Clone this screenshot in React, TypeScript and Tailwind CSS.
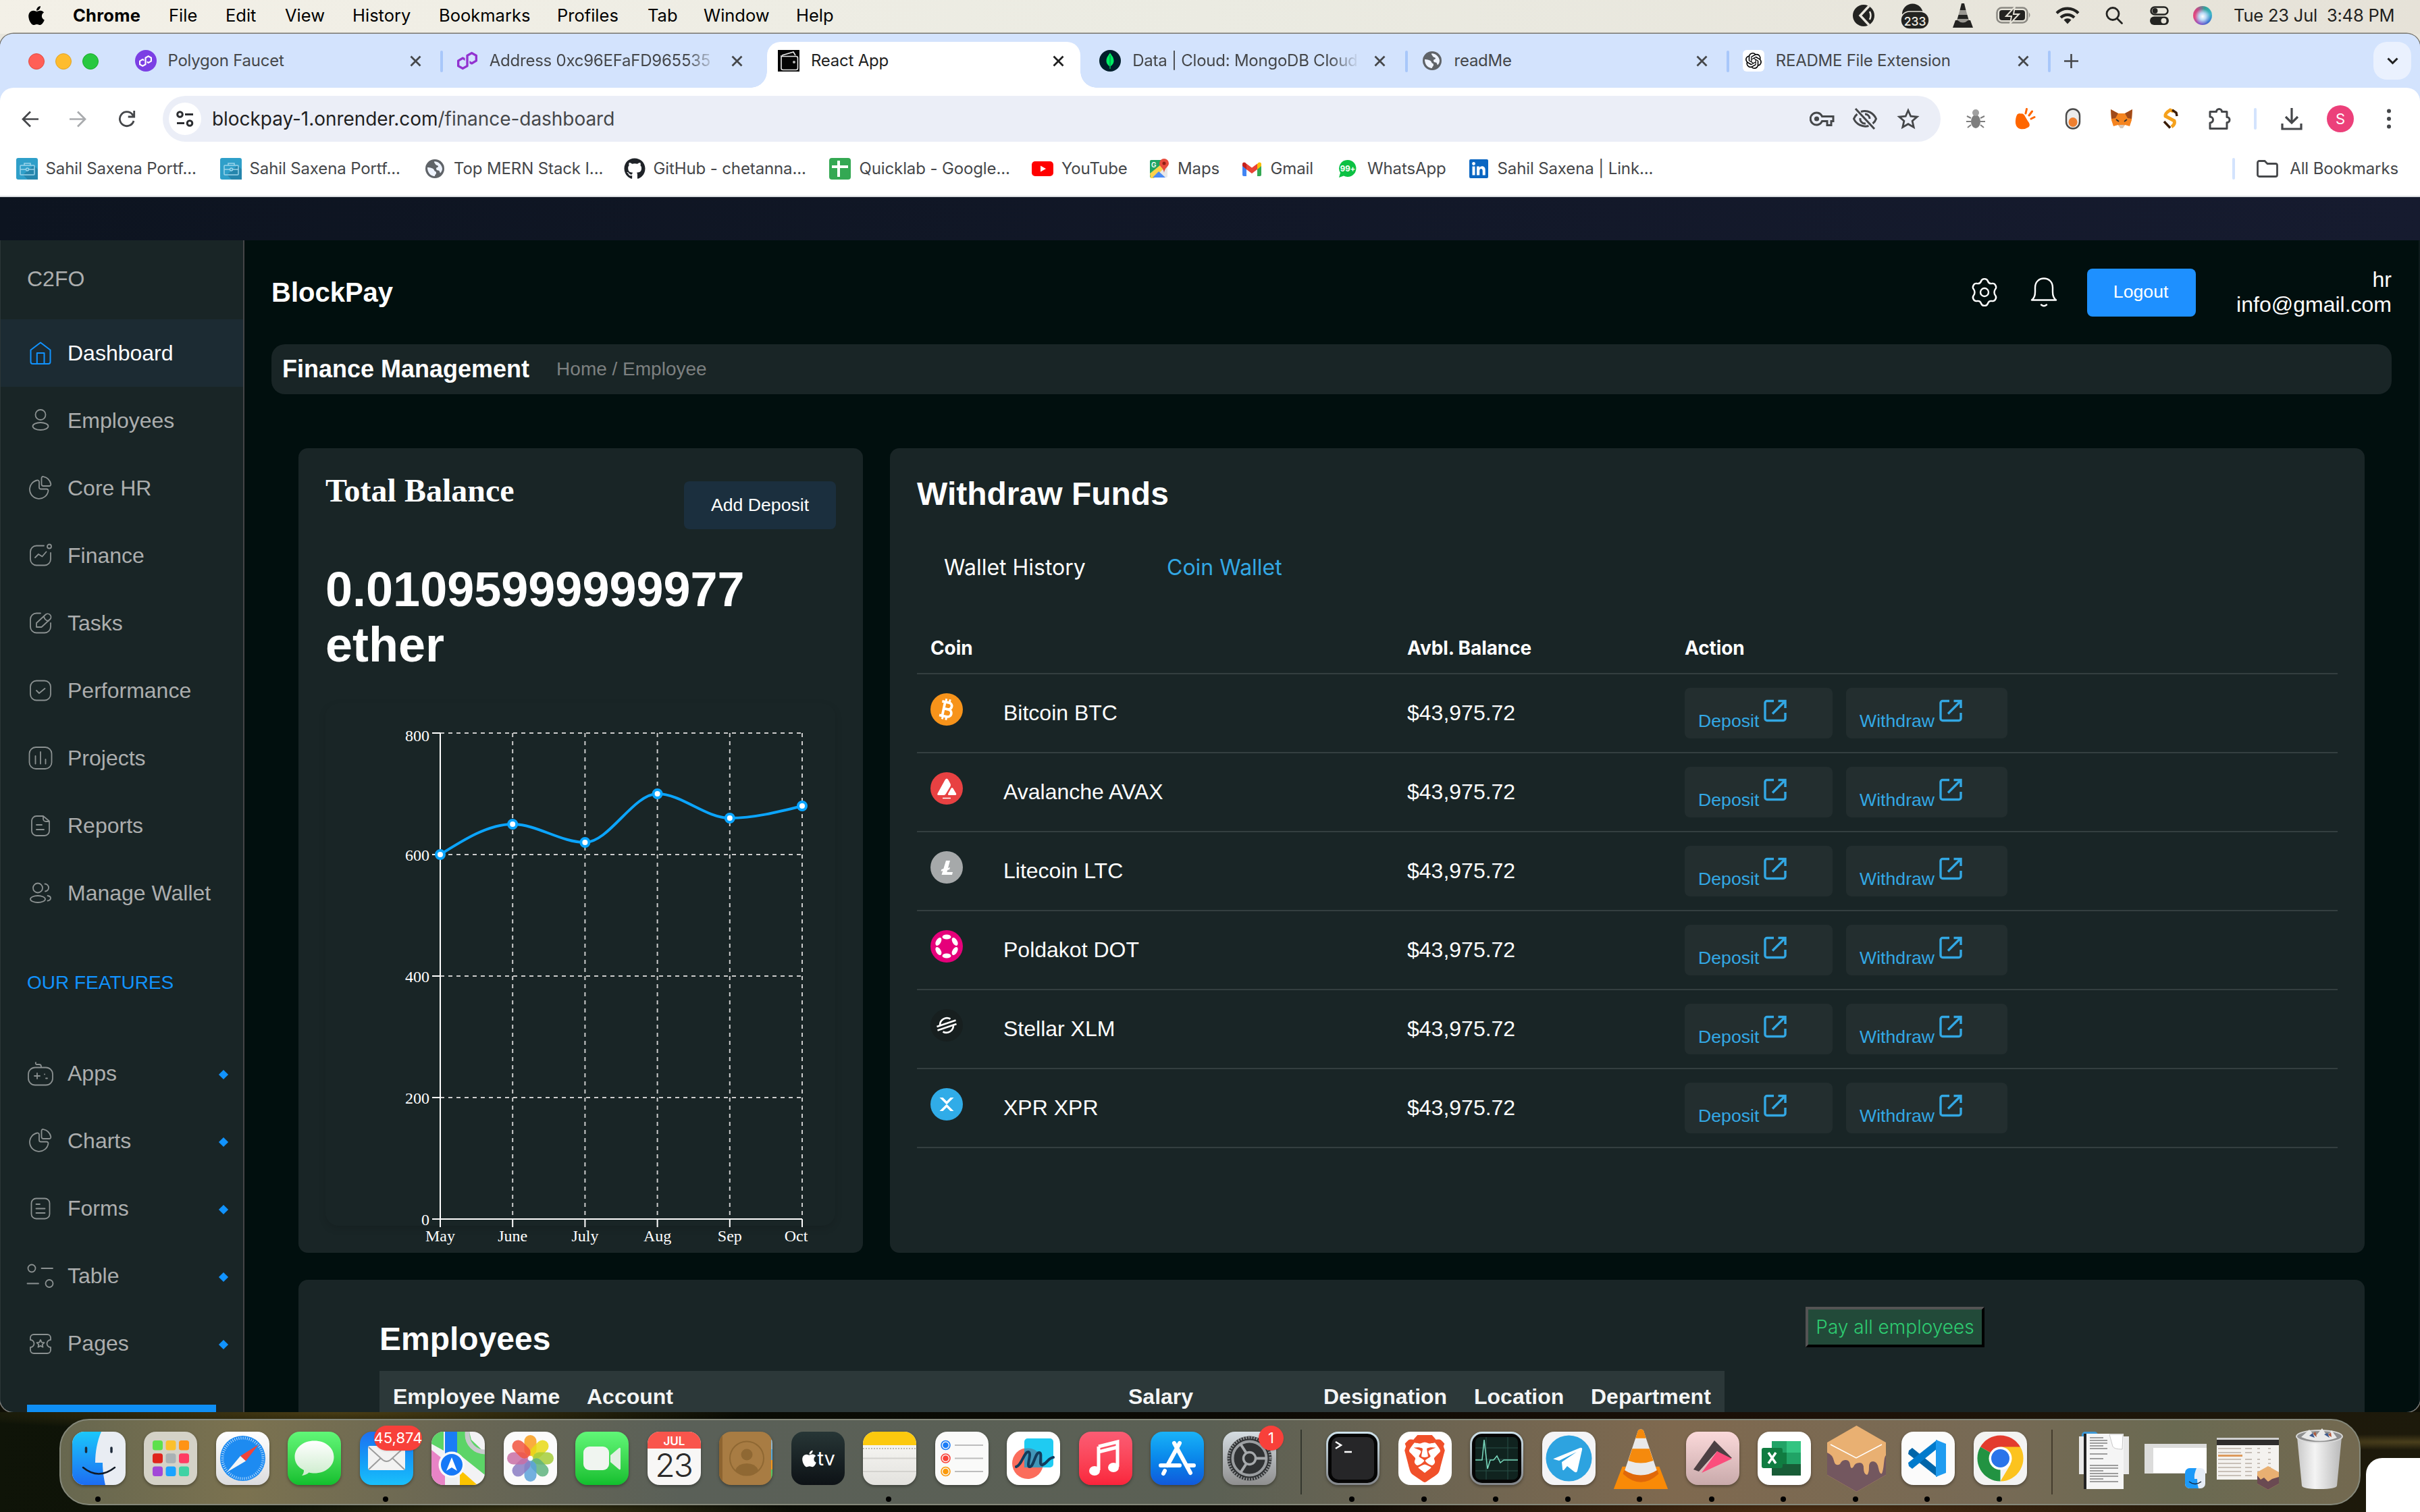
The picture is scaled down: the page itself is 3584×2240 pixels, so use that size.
import React from 'react';
import { FaApple, FaGithub } from 'react-icons/fa';
import { SiOpenai, SiPolygon, SiBrave } from 'react-icons/si';

/* ---------------------------------- menu bar --------------------------------- */

const menuItems = [
  { label: 'File', w: 'w-[84px]' },
  { label: 'Edit', w: 'w-[88px]' },
  { label: 'View', w: 'w-[100px]' },
  { label: 'History', w: 'w-[128px]' },
  { label: 'Bookmarks', w: 'w-[175px]' },
  { label: 'Profiles', w: 'w-[134px]' },
  { label: 'Tab', w: 'w-[83px]' },
  { label: 'Window', w: 'w-[137px]' },
  { label: 'Help', w: 'w-[80px]' },
];

function MenuBar() {
  return (
    <div className="flex h-[50px] shrink-0 items-start justify-between bg-linear-to-r from-[#f3f0e7] via-[#ebebe2] to-[#e6e2d8] text-[25.5px] text-black">
      <div className="flex h-[46px] items-center">
        <FaApple className="ml-[39px] h-[32px] w-[30px]" />
        <span className="ml-[39px] w-[142px] font-bold tracking-[0.250px]">Chrome</span>
        {menuItems.map((m) => (
          <span key={m.label} className={m.w}>{m.label}</span>
        ))}
      </div>
      <div className="flex h-[46px] items-center text-[#1f1f1d]">
        <svg width="32" height="34" viewBox="0 0 32 34">
          <circle cx="16" cy="17" r="16" fill="#232321" />
          <path d="M24 3L11 17l13 14" fill="none" stroke="#e9e6dd" strokeWidth="3.5" />
          <path d="M25 11c2 4 2 8 0 12" fill="none" stroke="#e9e6dd" strokeWidth="2.5" />
        </svg>
        <svg className="ml-[39px]" width="42" height="40" viewBox="0 0 42 40">
          <path d="M2 18a15 15 0 0 1 31 0z" fill="#232321" />
          <rect x="0" y="14" width="42" height="26" rx="13" fill="#232321" stroke="#e9e6dd" strokeWidth="1.5" />
          <text x="21" y="34.500" textAnchor="middle" fontSize="17.500" fontFamily="Inter" fontWeight="500" fill="#f0ede4">233</text>
        </svg>
        <svg className="ml-[33px]" width="34" height="38" viewBox="0 0 34 38">
          <path d="M15 1h4l2.500 10h-9z" fill="#232321" />
          <path d="M12.500 11h9l2 7h-13z" fill="#999791" />
          <path d="M10.500 18h13l2 7h-17z" fill="#232321" />
          <path d="M8.500 24h17l1 5q-9.500 6-19 0z" fill="#999791" />
          <path d="M6 26h3q8 7 16 0h3l4 11H2z" fill="#232321" />
        </svg>
        <svg className="ml-[32px]" width="52" height="26" viewBox="0 0 52 26">
          <rect x="1.500" y="1.500" width="45" height="22" rx="7" fill="none" stroke="#8b8983" strokeWidth="2.500" />
          <rect x="5" y="5" width="38" height="15" rx="4" fill="#232321" />
          <path d="M49 8.500q3 3.500 0 8z" fill="#8b8983" />
          <path d="M28 0L15 14h8l-2 11 13-14h-8z" fill="#232321" stroke="#e6e3d9" strokeWidth="2" />
        </svg>
        <svg className="ml-[36px]" width="36" height="28" viewBox="0 0 36 28" fill="none" stroke="#232321" strokeWidth="4.200">
          <path d="M2 10.500a22 22 0 0 1 32 0" />
          <path d="M8 17a14 14 0 0 1 20 0" />
          <path d="M12.500 20.500a8 8 0 0 1 11 0L18 26.500z" fill="#232321" stroke="none" />
        </svg>
        <svg className="ml-[37px]" width="28" height="28" viewBox="0 0 28 28" fill="none" stroke="#232321" strokeWidth="2.800" strokeLinecap="round">
          <circle cx="12" cy="11.500" r="9" />
          <path d="M18.500 18.500l7 7" />
        </svg>
        <svg className="ml-[39px]" width="28" height="28" viewBox="0 0 28 28">
          <rect x="1.500" y="1.500" width="25" height="11" rx="5.500" fill="none" stroke="#232321" strokeWidth="2.500" />
          <circle cx="7.500" cy="7" r="4" fill="#232321" />
          <rect x="0" y="15.500" width="28" height="12.500" rx="6.200" fill="#232321" />
          <circle cx="20.500" cy="21.700" r="4" fill="#e6e3d9" />
        </svg>
        <span className="ml-[36px] h-[28px] w-[28px] rounded-full bg-[radial-gradient(circle_at_50%_55%,#ffffff_0%,#b9d8f5_25%,transparent_55%),conic-gradient(from_20deg,#2fa39a,#3fb6c9,#3b6fd0,#8a58c9,#e8467c,#c74a86,#2fa39a)]" />
        <span className="ml-[32px] w-[238px] text-[25.500px] tracking-[-0.200px] whitespace-pre">Tue 23 Jul  3:48 PM</span>
        <span className="w-[38px]" />
      </div>
    </div>
  );
}

/* --------------------------------- tab strip --------------------------------- */

function Globe({ size }: { size: number }) {
  return (
    <svg width={size} height={size} viewBox="0 0 28 28">
      <circle cx="14" cy="14" r="14" fill="#5f6368" />
      <path d="M3 12c4 0 9 1 10 4s3 1 3 4-2 2-2 5c-6 0-11-5-11-13zM13 3.500c4-1 11 3 12 10 0 3-1 5-3 7-1-2-1-4-3-4s-3-1-3-3 3-1 3-3-3-1-4-3-2-2-2-4z" fill="#eef3fd" />
    </svg>
  );
}

function Close({ dark }: { dark?: boolean }) {
  return (
    <svg width="17" height="17" viewBox="0 0 17 17" fill="none" stroke={dark ? '#1f1f1f' : '#45474a'} strokeWidth="2.800">
      <path d="M1.500 1.500l14 14M15.500 1.500l-14 14" />
    </svg>
  );
}

type TabProps = { icon: React.ReactNode; title: string; active?: boolean; fade?: boolean; divider?: boolean };

function Tab({ icon, title, active, fade, divider }: TabProps) {
  return (
    <div className="relative flex h-[56px] w-[476.250px] shrink-0 items-center">
      {active && (
        <div className="absolute top-0 left-[6px] h-[68px] w-[464px] rounded-t-[20px] bg-white">
          <div className="absolute bottom-0 -left-[24px] h-[24px] w-[24px] bg-[radial-gradient(circle_at_0_0,#d3e3fd_23.500px,#ffffff_24px)]" />
          <div className="absolute -right-[24px] bottom-0 h-[24px] w-[24px] bg-[radial-gradient(circle_at_100%_0,#d3e3fd_23.500px,#ffffff_24px)]" />
        </div>
      )}
      <div className="relative flex w-full items-center">
        <div className="ml-[22px] flex h-[32px] w-[32px] items-center justify-center">{icon}</div>
        <div className={'ml-[17px] w-[340px] whitespace-nowrap text-[24px] tracking-[-0.240px] ' + (active ? 'text-[#1f1f1f] ' : 'text-[#45474a] ') + (fade ? '[mask-image:linear-gradient(to_right,black_86%,transparent_99%)]' : '')}>{title}</div>
        <div className="ml-[18px]"><Close dark={active} /></div>
      </div>
      {divider && <div className="absolute top-[13px] right-[-2px] h-[32px] w-[4px] rounded-full bg-[#a8c7fa]" />}
    </div>
  );
}

function TabStrip() {
  return (
    <div className="flex h-[80px] shrink-0 items-start bg-[#d3e3fd] pt-[12px]">
      <div className="flex h-[58px] w-[177.500px] shrink-0 items-center gap-[16px] pl-[42px]">
        <span className="h-[24px] w-[24px] rounded-full border border-[#e24b41] bg-[#ff5f57]" />
        <span className="h-[24px] w-[24px] rounded-full border border-[#e1a325] bg-[#febc2e]" />
        <span className="h-[24px] w-[24px] rounded-full border border-[#1aab29] bg-[#28c840]" />
      </div>
      <Tab divider title="Polygon Faucet" icon={<span className="flex h-[32px] w-[32px] items-center justify-center rounded-full bg-[#7b3fe4]"><SiPolygon className="h-[19px] w-[19px] text-white" /></span>} />
      <Tab fade title="Address 0xc96EFaFD965535" icon={<SiPolygon className="h-[30px] w-[30px] text-[#9233d0]" />} />
      <Tab active title="React App" icon={
        <svg width="32" height="32" viewBox="0 0 32 32">
          <rect width="32" height="32" fill="#050505" />
          <path d="M5 9V27a2.500 2.500 0 0 0 2.500 2.500H27a2.500 2.500 0 0 0 2.500-2.500V12A2.500 2.500 0 0 0 27 9.500H6zM6 8l17-5 3 5" fill="none" stroke="#e8e8e8" strokeWidth="1.600" />
          <circle cx="24" cy="18" r="2" fill="#bbb" />
        </svg>} />
      <Tab fade divider title="Data | Cloud: MongoDB Cloud" icon={
        <svg width="32" height="32" viewBox="0 0 32 32">
          <circle cx="16" cy="16" r="16" fill="#001e2b" />
          <path d="M16 4c1 3 5.500 6 5.500 12 0 5-3.500 7-5 8.500V28h-1v-3.500c-1.500-1.500-5-3.500-5-8.500 0-6 4.500-9 5.500-12z" fill="#00ed64" />
          <path d="M16 8v19" stroke="#00994a" strokeWidth="1.200" />
        </svg>} />
      <Tab divider title="readMe" icon={<Globe size={28} />} />
      <Tab divider title="README File Extension" icon={<span className="flex h-[32px] w-[32px] items-center justify-center rounded-[6px] bg-white"><SiOpenai className="h-[24px] w-[24px] text-black" /></span>} />
      <div className="flex h-[56px] flex-1 items-center justify-between pr-[13px] pl-[22px]">
        <svg width="21" height="21" viewBox="0 0 21 21" stroke="#45474a" strokeWidth="2.600"><path d="M10.500 0v21M0 10.500h21" /></svg>
        <div className="flex h-[56px] w-[56px] items-center justify-center rounded-[20px] bg-[#eaf1fe]">
          <svg width="17" height="11" viewBox="0 0 17 11" fill="none" stroke="#1f1f1f" strokeWidth="3"><path d="M1.500 1.500l7 7 7-7" /></svg>
        </div>
      </div>
    </div>
  );
}

/* ---------------------------------- toolbar ---------------------------------- */

function Toolbar() {
  return (
    <div className="flex h-[92px] shrink-0 items-center rounded-t-[20px] bg-white pl-[32px] text-[#45474a]">
      <svg width="25" height="25" viewBox="0 0 25 25" fill="none" stroke="#45474a" strokeWidth="2.700"><path d="M25 12.500H2M13 1.500l-11 11 11 11" /></svg>
      <svg className="ml-[46px]" width="25" height="25" viewBox="0 0 25 25" fill="none" stroke="#a9abae" strokeWidth="2.700"><path d="M0 12.500h23M12 1.500l11 11-11 11" /></svg>
      <svg className="ml-[47px]" width="26" height="26" viewBox="0 0 26 26" fill="none" stroke="#45474a" strokeWidth="2.800"><path d="M23 16A10.500 10.500 0 1 1 21 6.500l2.500 3M23.700 1v9h-9" /></svg>
      <div className="ml-[40px] flex h-[68px] w-[2633px] items-center rounded-full bg-[#ebeef7] pl-[9px]">
        <div className="flex h-[48px] w-[48px] items-center justify-center rounded-full bg-white">
          <svg width="26" height="24" viewBox="0 0 26 24" fill="none" stroke="#2b2d30" strokeWidth="3"><circle cx="5.500" cy="5.500" r="3.800" /><path d="M13 5.500h12M1 18.500h11" /><circle cx="20" cy="18.500" r="3.800" /></svg>
        </div>
        <div className="ml-[16px] flex-1 text-[28px] tracking-[-0.050px] text-[#45474a]"><span className="text-[#1f1f1f]">blockpay-1.onrender.com</span>/finance-dashboard</div>
        <svg width="37" height="24" viewBox="0 0 37 24" fill="none" stroke="#45474a" strokeWidth="3"><path d="M18.500 8.500H35v7h-3v6h-6v-6h-7.500a9 9 0 1 1 0-7z" /><circle cx="10.500" cy="12" r="3.600" fill="#45474a" stroke="none" /></svg>
        <svg className="ml-[26px]" width="38" height="34" viewBox="0 0 38 34" fill="none" stroke="#45474a" strokeWidth="3"><path d="M5 2l28 30M13 6.500C23 3 32 9 35.500 17c-1 3-3 5.500-5 7M24.500 27.500C15 30 6 25 2.500 17c1-2.500 2.500-5 5-7" /><path d="M19 10a7 7 0 0 1 7 7M12 16a7 7 0 0 0 8 8" /></svg>
        <svg className="ml-[28px] mr-[31px]" width="34" height="32" viewBox="0 0 34 32" fill="none" stroke="#45474a" strokeWidth="2.800"><path d="M17 3.500l3.800 8.700 9.400.9-7.100 6.200 2.100 9.200-8.200-4.800-8.200 4.800 2.100-9.200-7.100-6.200 9.400-.9z" /></svg>
      </div>
      <svg className="ml-[37px]" width="30" height="30" viewBox="0 0 30 30">
        <ellipse cx="15" cy="19" rx="7" ry="10" fill="#7e7e7e" /><ellipse cx="15" cy="6" rx="5" ry="5" fill="#a0a0a0" />
        <path d="M8 14L2 11M8 19H1M8 24l-5 4M22 14l6-3M22 19h7M22 24l5 4" stroke="#7e7e7e" strokeWidth="2" />
      </svg>
      <svg className="ml-[42px]" width="32" height="32" viewBox="0 0 32 32">
        <path d="M4.500 9.500q3-3 7 0L22 22q2 4-1 6.500-5 3.500-12 2.500-6-1.500-7-8.500-.5-8 2.500-13z" fill="#f60" />
        <path d="M8 9.500q4-3 7 1l7 12z" fill="#f60" />
        <path d="M17 8l1.500-6.500M22 11l4.500-6M25 16l5-2.500" stroke="#f60" strokeWidth="3" strokeLinecap="round" />
      </svg>
      <svg className="ml-[43px]" width="24" height="32" viewBox="0 0 24 32">
        <rect x="2" y="1.500" width="20" height="29" rx="10" fill="#ececec" stroke="#4a4a4a" strokeWidth="2.400" /><ellipse cx="12" cy="21" rx="6.500" ry="7" fill="#ee7f30" />
      </svg>
      <svg className="ml-[44px]" width="32" height="30" viewBox="0 0 32 30">
        <path d="M0 1l11 6h10l11-6-1 16-3 9-7-2-3 4h-4l-3-4-7 2-3-9z" fill="#f5841f" />
        <path d="M0 1l11 6-4 7-6 1zM32 1L21 7l4 7 6 1z" fill="#a04a1a" />
        <path d="M12 24h8l-2 5h-4z" fill="#d8c7b8" /><path d="M8 16l4 3M24 16l-4 3" stroke="#333" strokeWidth="2" />
      </svg>
      <svg className="ml-[44px]" width="24" height="32" viewBox="0 0 24 32" fill="none">
        <path d="M17 5L12 3Q4 8 5 12l13 7q2 5-4 9" stroke="#f5a11c" strokeWidth="5" />
        <path d="M3 20l9 9.500M22 12l-1-5-6-4" stroke="#3a1c05" strokeWidth="3.500" />
      </svg>
      <svg className="ml-[44px]" width="34" height="34" viewBox="0 0 34 34" fill="none" stroke="#45474a" strokeWidth="3"><path d="M3 6.500h9.500a4 4 0 0 1 8 0H28v8a4 4 0 0 1 0 8v9H3v-8.500a4.500 4.500 0 0 0 0-9z" strokeLinejoin="round" /></svg>
      <div className="ml-[34px] h-[32px] w-[4px] rounded-full bg-[#d3e3fd]" />
      <svg className="ml-[36px]" width="32" height="34" viewBox="0 0 32 34" fill="none" stroke="#45474a" strokeWidth="3.200"><path d="M16 1v21M7 14l9 9 9-9M2 24v8h28v-8" /></svg>
      <div className="ml-[36px] flex h-[40px] w-[40px] items-center justify-center rounded-full bg-[#ec407a] text-[22px] text-white">S</div>
      <svg className="ml-[49px]" width="6" height="30" viewBox="0 0 6 30" fill="#45474a"><circle cx="3" cy="3.500" r="3" /><circle cx="3" cy="15" r="3" /><circle cx="3" cy="26.500" r="3" /></svg>
    </div>
  );
}

/* --------------------------------- bookmarks --------------------------------- */

const Briefcase = () => (
  <svg width="32" height="32" viewBox="0 0 32 32">
    <rect width="32" height="32" rx="3" fill="#2f9fc9" /><path d="M10 25l16-14 6 6v15H17z" fill="#2585ac" />
    <g fill="none" stroke="#9bd4ea" strokeWidth="1.500"><rect x="6" y="11" width="21" height="14" rx="1" /><path d="M12 11V8h9v3M6 17h21" /><circle cx="16.500" cy="17" r="2" fill="#2f9fc9" /></g>
  </svg>
);

const bookmarks: { label: string; w: string; iw: string; icon: React.ReactNode }[] = [
  { label: 'Sahil Saxena Portf...', w: 'w-[302px]', iw: 'w-[43.500px]', icon: <Briefcase /> },
  { label: 'Sahil Saxena Portf...', w: 'w-[304px]', iw: 'w-[43.500px]', icon: <Briefcase /> },
  { label: 'Top MERN Stack I...', w: 'w-[293.500px]', iw: 'w-[42px]', icon: <Globe size={28} /> },
  { label: 'GitHub - chetanna...', w: 'w-[304.500px]', iw: 'w-[44px]', icon: <FaGithub className="h-[32px] w-[32px] text-[#1f2328]" /> },
  {
    label: 'Quicklab - Google...', w: 'w-[300px]', iw: 'w-[44.500px]', icon: (
      <svg width="32" height="32" viewBox="0 0 32 32"><rect width="32" height="32" rx="4" fill="#34a853" /><path d="M14 4v24M4 13h24" stroke="#fff" strokeWidth="4" /></svg>)
  },
  {
    label: 'YouTube', w: 'w-[175px]', iw: 'w-[44px]', icon: (
      <svg width="32" height="22" viewBox="0 0 32 22"><rect width="32" height="22" rx="5" fill="#f00" /><path d="M13 6.500v9l8-4.500z" fill="#fff" /></svg>)
  },
  {
    label: 'Maps', w: 'w-[137px]', iw: 'w-[41px]', icon: (
      <svg width="28" height="30" viewBox="0 0 28 30"><rect y="2" width="26" height="26" rx="2" fill="#e8e8e8" /><path d="M0 4a2 2 0 0 1 2-2h14v10L0 28z" fill="#1fa463" /><path d="M0 22L16 9l4 6L6 29H1z" fill="#fbd24b" /><path d="M4 28l9-9 10 9z" fill="#4a8af4" /><path d="M21 0a7 7 0 0 1 7 7c0 5-6 6-7 14-1-8-7-9-7-14a7 7 0 0 1 7-7z" fill="#e64b3c" /><circle cx="21" cy="7" r="2.500" fill="#8f1f14" /><text x="2" y="13" fontSize="10" fontFamily="Inter" fontWeight="600" fill="#fff">G</text></svg>)
  },
  {
    label: 'Gmail', w: 'w-[144px]', iw: 'w-[41.500px]', icon: (
      <svg width="28" height="21" viewBox="0 0 28 21"><path d="M0 3v16a2 2 0 0 0 2 2h4V9z" fill="#4285f4" /><path d="M28 3v16a2 2 0 0 1-2 2h-4V9z" fill="#34a853" /><path d="M22 3l1.500-2C26-.500 28 1 28 3v3l-6 5z" fill="#fbbc04" /><path d="M6 3L4.500 1C2-.500 0 1 0 3v3l6 5z" fill="#c5221f" /><path d="M6 2.500l8 6 8-6V11l-8 6-8-6z" fill="#ea4335" /></svg>)
  },
  {
    label: 'WhatsApp', w: 'w-[192px]', iw: 'w-[41px]', icon: (
      <svg className="-ml-[2px]" width="28" height="28" viewBox="0 0 28 28"><path d="M14 1a12.500 12.500 0 1 1-6 23.500L1 27l2-7A12.500 12.500 0 0 1 14 1z" fill="#0cc143" /><text x="14" y="18" textAnchor="middle" fontSize="11.500" fontFamily="Inter" fontWeight="700" fill="#fff">99+</text></svg>)
  },
  {
    label: 'Sahil Saxena | Link...', w: 'w-[300px]', iw: 'w-[41.500px]', icon: (
      <svg width="28" height="28" viewBox="0 0 28 28"><rect width="28" height="28" rx="2" fill="#0a66c2" /><g fill="#fff"><rect x="4.500" y="10.500" width="4" height="13" /><circle cx="6.500" cy="6.500" r="2.400" /><path d="M11 10.500h4v2c2-3.500 8.700-3 8.700 3v8h-4V17c0-4-4.500-4-4.500 0v6.500H11z" /></g></svg>)
  },
];

function BookmarksBar() {
  return (
    <div className="flex h-[70px] shrink-0 items-center justify-between border-b-2 border-[#dadde0] bg-white pb-[12px] pl-[24px] text-[24px] tracking-[-0.120px] text-[#45474a]">
      <div className="flex items-center">
        {bookmarks.map((b, i) => (
          <div key={i} className={'flex shrink-0 items-center whitespace-nowrap ' + b.w}>
            <span className={'flex h-[32px] shrink-0 items-center ' + b.iw}>{b.icon}</span>
            <span>{b.label}</span>
          </div>
        ))}
      </div>
      <div className="flex items-center pr-[32px]">
        <div className="h-[32px] w-[4px] rounded-full bg-[#d3e3fd]" />
        <svg className="ml-[32px]" width="32" height="26" viewBox="0 0 32 26" fill="none" stroke="#45474a" strokeWidth="2.800"><path d="M1.500 4A2.500 2.500 0 0 1 4 1.500h8l4 4h12A2.500 2.500 0 0 1 30.500 8v14a2.500 2.500 0 0 1-2.500 2.500H4A2.500 2.500 0 0 1 1.500 22z" /></svg>
        <span className="ml-[17px]">All Bookmarks</span>
      </div>
    </div>
  );
}

/* ----------------------------------- sidebar --------------------------------- */

const roundedBox = 'M12 3.500h12a9 9 0 0 1 9 9v11a9 9 0 0 1-9 9H12a9 9 0 0 1-9-9v-11a9 9 0 0 1 9-9z';
const openBox = 'M23 3.500H12a9 9 0 0 0-9 9v11a9 9 0 0 0 9 9h12a9 9 0 0 0 9-9V14';
const pie = (
  <>
    <path d="M13 6.500c1.500-.3 3 .8 3 2.500v8c0 1.500 1 2.500 2.500 2.500H27c1.600 0 2.800 1.400 2.400 3A13.800 13.800 0 1 1 13 6.500z" />
    <path d="M19.500 3.500c0-1.600 1.300-2.800 2.800-2.400A14.500 14.500 0 0 1 33.300 12c.3 1.600-.9 3-2.500 3h-8.500c-1.600 0-2.800-1.200-2.800-2.800z" />
  </>
);

const icons: Record<string, React.ReactNode> = {
  Dashboard: <path d="M3.500 13.500L18 2.500l14.500 11V31a3 3 0 0 1-3 3h-23a3 3 0 0 1-3-3zM12.800 34V18h10.700v16" />,
  Employees: <><circle cx="18" cy="9.500" r="7.500" /><ellipse cx="18" cy="26.500" rx="11.500" ry="5.500" /></>,
  'Core HR': pie,
  Finance: <><path d={openBox} /><circle cx="31" cy="4.500" r="3" /><path d="M10 21l5-5 5.500 3.500 6-7" /></>,
  Tasks: <><path d="M18 3.500h-6a9 9 0 0 0-9 9v11a9 9 0 0 0 9 9h12a9 9 0 0 0 9-9V18" /><path d="M12 18L25.500 5.500a4.800 4.800 0 0 1 7 6.500L19.500 24H12zM23 8c.5 4 3 6.500 7 7" /></>,
  Performance: <><path d={roundedBox} /><path d="M12 18l4 4 8.500-7" /></>,
  Projects: <><path d="M11 2h14a9.500 9.500 0 0 1 9.500 9.500v13A9.500 9.500 0 0 1 25 34H11a9.500 9.500 0 0 1-9.500-9.500v-13A9.500 9.500 0 0 1 11 2z" /><path d="M10.500 15v11.500M18 9v17.500M25.500 20v6.500" /></>,
  Reports: <><path d="M22 4H12a7 7 0 0 0-7 7v15a7 7 0 0 0 7 7h12a7 7 0 0 0 7-7V11.500zM22 4v4a4 4 0 0 0 4 4h5M12 17h8M12 24h11" /></>,
  'Manage Wallet': <><circle cx="14" cy="10.500" r="7" /><ellipse cx="14" cy="27" rx="11" ry="5" /><path d="M24.500 4.500c3 0 5.500 2.500 5.500 5.500s-2 5-5 5.500M28.500 22c3 .5 4.500 2 4.500 3.500 0 2-2 3.500-4.500 4" /></>,
  Apps: <><path d="M10 9.500h16a10 10 0 0 1 10 10v6a10 10 0 0 1-10 10H10a10 10 0 0 1-10-10v-6a10 10 0 0 1 10-10zM19 9.500V8a3 3 0 0 0-3-3h-3a2 2 0 0 1-2-3M13 18v8M9 22h8M24 19.500h.1M26 25.500h2" /></>,
  Charts: pie,
  Forms: <><rect x="4.500" y="3.500" width="27" height="30" rx="7" /><path d="M11.500 12h5.500M11.500 18.500h13M11.500 25h13" /></>,
  Table: <><circle cx="5" cy="7" r="5.500" /><path d="M19.500 7H36M-1.500 29.500H15" /><circle cx="31" cy="29.500" r="5.500" /></>,
  Pages: <><path d="M8 5h20a5 5 0 0 1 5 5v3a5 5 0 0 0 0 11v4a5 5 0 0 1-5 5H8a5 5 0 0 1-5-5v-4a5 5 0 0 0 0-11v-3a5 5 0 0 1 5-5z" /><path d="M18 13l1.700 3.700 3.800.4-2.800 2.700.8 4-3.500-2-3.500 2 .8-4-2.800-2.700 3.800-.4z" /></>,
};

function NavItem({ label, active, marker }: { label: string; active?: boolean; marker?: boolean }) {
  return (
    <div className={'flex h-[100px] shrink-0 items-center pl-[41px] text-[32px] ' + (active ? 'bg-[#1c2b33] text-white' : 'text-[#acaeae]')}>
      <svg className="overflow-visible" width="36" height="36" viewBox="0 0 36 36" fill="none" stroke={active ? '#1193ff' : '#8b9191'} strokeWidth={active ? 2 : 1.8} strokeLinejoin="round" strokeLinecap="round">{icons[label]}</svg>
      <span className="ml-[22px] flex-1">{label}</span>
      {marker && <span className="mt-[4px] mr-[24px] h-[10px] w-[10px] rotate-45 bg-[#1193ff]" />}
    </div>
  );
}

function Sidebar() {
  return (
    <div className="flex w-[362px] shrink-0 flex-col overflow-hidden border-r-2 border-l border-r-[#454648] border-l-[#2b3637] bg-[#192526]">
      <div className="flex h-[117px] shrink-0 items-center pb-[3px] pl-[39px] text-[32px] text-[#acaeae]">C2FO</div>
      <NavItem label="Dashboard" active />
      {['Employees', 'Core HR', 'Finance', 'Tasks', 'Performance', 'Projects', 'Reports', 'Manage Wallet'].map((l) => <NavItem key={l} label={l} />)}
      <div className="flex h-[167px] shrink-0 items-center pb-[1px] pl-[39px] text-[28px] text-[#1193ff]">OUR FEATURES</div>
      {['Apps', 'Charts', 'Forms', 'Table', 'Pages'].map((l) => <NavItem key={l} label={l} marker />)}
      <div className="mt-[41px] ml-[39px] h-[20px] w-[280px] shrink-0 bg-[#0f8ff5]" />
    </div>
  );
}

/* ----------------------------------- content --------------------------------- */

const months = ['May', 'June', 'July', 'Aug', 'Sep', 'Oct'];
const balances = [600, 650, 620, 700, 660, 680];
const px = (i: number) => 169 + i * 107.2;
const py = (v: number) => 764 - v * 0.9;

function Chart() {
  return (
    <svg className="ml-[1px] overflow-visible" width="755" height="774" viewBox="0 0 755 774" fontFamily="Liberation Serif" fontSize="24" fill="#fff">
      <g stroke="#ccc" strokeWidth="2" strokeDasharray="6 6">
        {[200, 400, 600, 800].map((v) => <line key={v} x1="169" x2="705" y1={py(v)} y2={py(v)} />)}
        {[1, 2, 3, 4, 5].map((i) => <line key={i} x1={px(i)} x2={px(i)} y1="44" y2="764" />)}
      </g>
      <g stroke="#fff" strokeWidth="2">
        <path d="M169 44V764H705" fill="none" />
        {[0, 200, 400, 600, 800].map((v) => <line key={v} x1="157" x2="169" y1={py(v)} y2={py(v)} />)}
        {months.map((m, i) => <line key={m} x1={px(i)} x2={px(i)} y1="764" y2="776" />)}
      </g>
      {[0, 200, 400, 600, 800].map((v) => <text key={v} x="153" y={py(v) + (v === 800 ? 12 : 8.5)} textAnchor="end">{v}</text>)}
      {months.map((m, i) => <text key={m} x={i === 5 ? 696 : px(i)} y="797" textAnchor="middle">{m}</text>)}
      <path d="M169 224C204.700 201.500 240.500 179 276.200 179C311.900 179 347.700 206 383.400 206C419.100 206 454.900 134 490.600 134C526.300 134 562.100 170 597.800 170C633.500 170 669.300 161 705 152" fill="none" stroke="#0ba5ff" strokeWidth="4" />
      {balances.map((v, i) => <circle key={i} cx={px(i)} cy={py(v)} r="6" fill="#fff" stroke="#0ba5ff" strokeWidth="4" />)}
    </svg>
  );
}

const coins: { name: string; icon: React.ReactNode }[] = [
  {
    name: 'Bitcoin BTC', icon: <><circle cx="24" cy="24" r="24" fill="#f7931a" /><g transform="rotate(12 24 24)" fill="none" stroke="#fff" strokeWidth="3.800"><path d="M15 13.500h10.500a5 5 0 0 1 0 10H19M15 34.500h11.500a5.500 5.500 0 0 0 0-11H19M19.500 13.500v21" /><path d="M20.500 8.500v5M26 8.500v5M20.500 34.500v5M26 34.500v5" strokeWidth="3" /></g></>,
  },
  { name: 'Avalanche AVAX', icon: <><circle cx="24" cy="24" r="24" fill="#e84142" /><path d="M21.500 11.500q2.500-4 5 0l3 5.500q1 2 0 4l-7 11.500q-1.200 1.500-3 1.500h-7.500q-2.500 0-1.500-2.500zM30.500 24q1.500-2 3 0l4.500 7.500q.8 2.500-1.500 2.500h-9q-2.300 0-1.200-2.500z" fill="#fff" /><path d="M18 38.500h12" stroke="#fff" strokeWidth="1.500" /></> },
  { name: 'Litecoin LTC', icon: <><circle cx="24" cy="24" r="24" fill="#a6a9aa" /><path d="M23 14h6l-3 11 3-1-.8 3-3 1-.8 3H33l-1 4H16.500l1.800-6-2.800 1 .8-3 3-1z" fill="#fff" /></> },
  { name: 'Poldakot DOT', icon: <><circle cx="24" cy="24" r="24" fill="#e6007a" />{[0, 60, 120, 180, 240, 300].map((a) => <ellipse key={a} cx="24" cy="10" rx="6.500" ry="3.600" fill="#fff" transform={`rotate(${a} 24 24)`} />)}</> },
  { name: 'Stellar XLM', icon: <><circle cx="24" cy="24" r="24" fill="#171f1f" /><g fill="none" stroke="#fff" strokeWidth="2.600"><path d="M14 23.500a10.500 10.500 0 0 1 15.500-9M34 24.500a10.500 10.500 0 0 1-15.500 9M9.500 26L37.500 16.500M10.500 31.500L38.500 22" /></g></> },
  { name: 'XPR XPR', icon: <><circle cx="24" cy="24" r="24" fill="#30ace8" /><path d="M13.500 14h5l5.500 5.500 5.500-5.500h5L24 24.500zM13.500 34h5l5.500-5.500 5.500 5.500h5L24 23.500z" fill="#fff" /></> },
];

function ActionButton({ label, w }: { label: string; w: string }) {
  return (
    <div className={'flex h-[75px] items-start rounded-[8px] bg-[#232e2f] pl-[20px] text-[26.670px] text-[#33a8e4] ' + w}>
      <span className="mt-[29px]">{label}</span>
      <svg className="mt-[17px] ml-[7px]" width="34" height="34" viewBox="0 0 34 34" fill="none" stroke="#33a8e4" strokeWidth="3.400">
        <path d="M15 2.500H5A3 3 0 0 0 2 5.500v23a3 3 0 0 0 3 3h24a3 3 0 0 0 3-3V20M21.500 2.500H32v10.500M31.500 3L13 21.500" />
      </svg>
    </div>
  );
}

function WithdrawFunds() {
  return (
    <div className="flex h-[1192px] w-[2184px] flex-col rounded-[14px] bg-[#192526] px-[40px] pt-[40px] text-white">
      <div className="flex h-[55px] items-center text-[48px] font-bold">Withdraw Funds</div>
      <div className="flex h-[162px] items-center pt-[2px] pl-[40px] font-[Inter] text-[32px]">
        <span className="w-[330px]">Wallet History</span>
        <span className="text-[#33a8e4]">Coin Wallet</span>
      </div>
      <div className="grid h-[78px] grid-cols-[727px_410px_1fr] items-center border-b-2 border-[#343f40] pt-[2px] pl-[20px] font-[Inter] text-[28px] font-bold tracking-[-0.100px]">
        <span>Coin</span><span className="-ml-[21px]">Avbl. Balance</span><span className="-ml-[20px]">Action</span>
      </div>
      {coins.map((c) => (
        <div key={c.name} className="grid h-[117px] grid-cols-[108px_599px_410px_1fr] items-center border-b-2 border-[#343f40] pl-[20px] text-[32px]">
          <svg className="-mt-[11px]" width="48" height="48" viewBox="0 0 48 48">{c.icon}</svg>
          <span className="-mt-[2px]">{c.name}</span>
          <span className="-mt-[2px] -ml-px">$43,975.72</span>
          <div className="flex gap-[20px]">
            <ActionButton label="Deposit" w="w-[219px]" />
            <ActionButton label="Withdraw" w="w-[239px]" />
          </div>
        </div>
      ))}
    </div>
  );
}

function TotalBalance() {
  return (
    <div className="flex h-[1192px] w-[836px] flex-col rounded-[14px] bg-[#192526] px-[40px] pt-[49px] text-white">
      <div className="flex h-[71px] items-start justify-between">
        <div className="font-['Liberation_Serif'] text-[48px] leading-[28px] font-bold">Total Balance</div>
        <div className="flex h-[71px] w-[225px] items-center justify-center rounded-[8px] bg-[#1b2f3e] pb-[2px] text-[26.670px]">Add Deposit</div>
      </div>
      <div className="mt-[48px] text-[72px] leading-[82px] font-bold">{'0.01095' + '9999999' + '77'}<br />ether</div>
      <div className="mt-[46px] h-[774px] w-[755px] rounded-[20px] shadow-[0_4px_12px_rgba(0,0,0,0.120)]"><Chart /></div>
    </div>
  );
}

function Dashboard() {
  return (
    <div className="flex flex-1 flex-col border-r-2 border-[#0d1a1b] bg-[#010f0e] font-['Liberation_Sans',sans-serif]">
      <div className="flex h-[154px] shrink-0 items-center justify-between px-[40px] text-white">
        <div className="text-[40px] font-bold">BlockPay</div>
        <div className="flex items-center">
          <svg width="40" height="44" viewBox="0 0 40 44" fill="none" stroke="#fff" strokeWidth="2.400" strokeLinejoin="round">
            <circle cx="20" cy="22" r="6" />
            <path d="M15 5.500c1.500-4.500 8.500-4.500 10 0 1 3 3 4 6 3.500 4.500-1 8 5 5 8.500-2 2.500-2 6.500 0 9 3 3.500-.5 9.500-5 8.500-3-.5-5 .5-6 3.500-1.500 4.500-8.500 4.500-10 0-1-3-3-4-6-3.500-4.500 1-8-5-5-8.500 2-2.500 2-6.500 0-9-3-3.500.5-9.500 5-8.500 3 .5 5-.5 6-3.500z" />
          </svg>
          <svg className="ml-[48px]" width="40" height="44" viewBox="0 0 40 44" fill="none" stroke="#fff" strokeWidth="2.400" strokeLinecap="round" strokeLinejoin="round">
            <path d="M2 33.500h36c-4-3-5-7-5-12V15C33 7 27.500 1.500 20 1.500S7 7 7 15v6.500c0 5-1 9-5 12zM16 40.500q4 3.500 8 0" />
          </svg>
          <div className="ml-[44px] flex h-[71px] w-[161px] items-center justify-center rounded-[8px] bg-[#1e90ff] pr-[2px] pb-[2px] text-[26.670px]">Logout</div>
          <div className="ml-[60px] text-right text-[32px] leading-[37px]">hr<br />info@gmail.com</div>
        </div>
      </div>
      <div className="mx-[40px] flex h-[74px] shrink-0 items-center rounded-[20px] bg-[#192526] pl-[16px]">
        <span className="text-[36px] font-bold text-white">Finance Management</span>
        <span className="ml-[40px] text-[28px] text-[#7d8080]">Home / Employee</span>
      </div>
      <div className="mt-[80px] ml-[80px] flex shrink-0 gap-[40px]">
        <TotalBalance />
        <WithdrawFunds />
      </div>
      <div className="mt-[40px] ml-[80px] h-[220px] w-[3060px] shrink-0 rounded-t-[14px] bg-[#192526] pt-[40px] pl-[120px]">
        <div className="flex h-[95px] w-[2377px] items-start justify-between">
          <div className="text-[48px] leading-[95px] font-bold text-white">Employees</div>
          <div className="flex h-[60px] w-[265px] items-center justify-center border-4 border-t-[#545454] border-r-black border-b-black border-l-[#545454] bg-[#224a39] font-[Inter] text-[28px] font-light text-[#2ecc71]">Pay all employees</div>
        </div>
        <div className="flex h-[75px] w-[1992px] items-center bg-[#2c3839] pl-[20px] text-[32px] font-bold text-[#f4f5f5]">
          <span className="w-[287px]">Employee Name</span>
          <span className="w-[802px]">Account</span>
          <span className="w-[289px]">Salary</span>
          <span className="w-[223px]">Designation</span>
          <span className="w-[173px]">Location</span>
          <span>Department</span>
        </div>
      </div>
    </div>
  );
}

/* ------------------------------------ dock ----------------------------------- */

function Squircle({ bg, children }: { bg: string; children?: React.ReactNode }) {
  return (
    <div className={'h-[79px] w-[79px] overflow-hidden rounded-[18px] shadow-[0_2px_4px_rgba(0,0,0,0.350)] ' + bg}>
      <svg width="79" height="79" viewBox="0 0 79 79">{children}</svg>
    </div>
  );
}

function DockItem({ children, dot, badge, wide }: { children: React.ReactNode; dot?: boolean; badge?: string; wide?: boolean }) {
  return (
    <div className="relative flex h-full w-[106.500px] shrink-0 flex-col items-center pt-[17px]">
      {children}
      {badge && (
        <div className={'absolute top-[8px] flex h-[37px] items-center justify-center rounded-full bg-[#f8403a] text-[22px] text-white shadow ' + (wide ? 'left-[35px] w-[71px]' : 'left-[67px] w-[37px]')}>{badge}</div>
      )}
      {dot && <div className="absolute bottom-[3px] left-[47.500px] h-[8px] w-[8px] rounded-full bg-black" />}
    </div>
  );
}

const launchpad = ['#5ee04c', '#fbc02d', '#ff9314', '#e0241c', '#a9b2b5', '#ff3b63', '#a247d8', '#1aa3ff', '#3ed2a4'];
const petals = ['#f99d1c', '#e8d915', '#a4cc3a', '#5eb37e', '#5aa2d9', '#8a7cc3', '#c86fa5', '#f1553f'];
const excelRows = ['#21a366', '#107c41', '#185c37'];

function Dock() {
  return (
    <div className="flex h-[128px] w-[3408px] rounded-[44px] border-2 border-[#85887a] bg-[linear-gradient(to_right,#67674f_0%,#7b7250_8%,#6a6754_17%,#5a6058_27%,#5b6054_50%,#7f694f_70%,#776a55_84%,#6a6a52_92%,#736950_100%)] pl-[3px] font-[Inter]">
      <DockItem dot>
        <Squircle bg="bg-[#e9edf3]">
          <defs><linearGradient id="finder" x2="0" y2="1"><stop stopColor="#1bc7fb" /><stop offset="1" stopColor="#1d6cf2" /></linearGradient></defs>
          <path d="M0 0h43c-6 14-9 30-9 46h11c0 12 2 24 4 33H0z" fill="url(#finder)" />
          <path d="M20.500 24v6M58 24v6" stroke="#1e2a3a" strokeWidth="3.500" strokeLinecap="round" /><path d="M16 53q23 19 47 0" fill="none" stroke="#111a26" strokeWidth="2.500" strokeLinecap="round" />
        </Squircle>
      </DockItem>
      <DockItem>
        <Squircle bg="bg-[#d4d2c7]">
          {launchpad.map((c, i) => <rect key={i} x={13 + (i % 3) * 19.500} y={13 + Math.floor(i / 3) * 19.300} width="15" height="14.500" rx="3.500" fill={c} />)}
        </Squircle>
      </DockItem>
      <DockItem>
        <Squircle bg="bg-linear-to-b from-white to-[#dcdcde]">
          <circle cx="39.500" cy="39.500" r="33.500" fill="#1d8bf1" />
          <circle cx="39.500" cy="39.500" r="30" fill="none" stroke="#cfe6fb" strokeWidth="4" strokeDasharray="0.900 2.240" />
          <path d="M63 19L44 43.500 36 36z" fill="#f0443a" /><path d="M16 60L36 36l8 7.500z" fill="#f3f5f7" />
        </Squircle>
      </DockItem>
      <DockItem>
        <Squircle bg="bg-linear-to-b from-[#60f777] to-[#10bf2d]">
          <defs><linearGradient id="bubble" x2="0" y2="1"><stop stopColor="#fff" /><stop offset="1" stopColor="#cdeccd" /></linearGradient></defs>
          <path d="M39.500 13.500c17 0 29 10.500 29 24s-12 24-29 24c-3 0-5-.3-8-1-2.500 2.500-6.500 4.300-10.500 4.500 2-2 3.200-5 3-8C15.500 53 10.500 46 10.500 37.500c0-13.500 12-24 29-24z" fill="url(#bubble)" />
        </Squircle>
      </DockItem>
      <DockItem dot badge="45,874" wide>
        <Squircle bg="bg-linear-to-b from-[#1e6ff0] to-[#1bc0fb]">
          <rect x="12" y="21" width="55" height="36" rx="3" fill="#f2f2f2" /><path d="M13 23l21 19q5.500 4 11 0l21-19M13 56l18-17M66 56L48 39" fill="none" stroke="#9c9c9c" strokeWidth="2" />
        </Squircle>
      </DockItem>
      <DockItem>
        <Squircle bg="bg-[#f2f2f4]">
          <path d="M0 0h18v28L0 18zM34 28V0h22l3 12 20 19v33z" fill="#5cd467" /><path d="M0 27l20 16v36H0z" fill="#e884c6" /><path d="M20 0h18v79H20z" fill="#1a7df5" /><path d="M20 45h18v34H20z" fill="#eef0f2" /><path d="M42 79V56l26 23z" fill="#fcc400" />
          <circle cx="79" cy="4" r="26" fill="none" stroke="#c7c9cc" strokeWidth="7" /><circle cx="30" cy="49" r="19.500" fill="#f8f8fa" /><circle cx="30" cy="49" r="16" fill="#1779f7" /><path d="M30 38l8 20-8-5-8 5z" fill="#fff" />
        </Squircle>
      </DockItem>
      <DockItem>
        <Squircle bg="bg-[#fbfbfb]">
          {petals.map((c, i) => <rect key={i} x="30.500" y="5" width="18" height="31" rx="9" fill={c} opacity="0.850" transform={`rotate(${i * 45} 39.5 39.5)`} />)}
        </Squircle>
      </DockItem>
      <DockItem>
        <Squircle bg="bg-linear-to-b from-[#60f777] to-[#10bf2d]">
          <rect x="12" y="22" width="38" height="35" rx="9" fill="#f0f5f0" /><path d="M52 35l13-11q2-1 2 1.500v29q0 2.500-2 1.500L52 45z" fill="#e2efe2" />
        </Squircle>
      </DockItem>
      <DockItem>
        <Squircle bg="bg-[#f8f7f6]">
          <rect width="79" height="25" fill="#f9554c" /><text x="39.500" y="19.500" textAnchor="middle" fontSize="17" fontWeight="600" fill="#fff">JUL</text>
          <text x="38.500" y="67" textAnchor="middle" fontSize="48" fontWeight="300" fill="#2b2b2b" letterSpacing="-2">23</text>
        </Squircle>
      </DockItem>
      <DockItem>
        <Squircle bg="bg-[#a87c43]">
          <rect width="5" height="79" fill="#8d6430" /><path d="M77 12h2v14h-2z" fill="#8fb7cf" /><path d="M77 26h2v16h-2z" fill="#53a9dd" /><path d="M77 42h2v14h-2z" fill="#f5971c" /><path d="M77 56h2v13h-2z" fill="#52ca63" />
          <circle cx="41" cy="39.500" r="25" fill="none" stroke="#8f6833" strokeWidth="2" /><circle cx="41" cy="34" r="8.500" fill="#8f6833" /><path d="M24 57q4-10 17-10t17 10q-7 7.500-17 7.500T24 57z" fill="#8f6833" />
        </Squircle>
      </DockItem>
      <DockItem>
        <div className="flex h-[79px] w-[79px] items-center justify-center rounded-[18px] bg-linear-to-b from-[#273636] to-[#0d1216] text-[29px] text-white">
          <FaApple className="h-[28px] w-[25px]" />tv
        </div>
      </DockItem>
      <DockItem dot>
        <Squircle bg="bg-linear-to-b from-[#fbfaf7] to-[#e3e2de]">
          <rect width="79" height="20" fill="#fcc90e" /><path d="M0 25h79" stroke="#a9a69d" strokeWidth="1.500" strokeDasharray="2 2" /><path d="M0 39.500h79M0 59h79" stroke="#d3d2ce" strokeWidth="2" />
        </Squircle>
      </DockItem>
      <DockItem>
        <Squircle bg="bg-[#fafaf9]">
          {['#1a7cf8', '#f9443b', '#fb9a0b'].map((c, i) => <g key={c}><circle cx="15.500" cy={20 + i * 19.500} r="6.500" fill="none" stroke={c} strokeWidth="1.600" /><circle cx="15.500" cy={20 + i * 19.500} r="4.300" fill={c} /><path d={`M29 ${20 + i * 19.500}h42`} stroke="#bdbdbd" strokeWidth="2" /></g>)}
        </Squircle>
      </DockItem>
      <DockItem>
        <Squircle bg="bg-white">
          <circle cx="31" cy="47" r="23" fill="#fb6d5c" /><rect x="26" y="10" width="43" height="43" rx="5" fill="#1fcbf2" /><path d="M26 53V25a23 23 0 0 1 28 23v5z" fill="#4196b8" /><path d="M14 52c8-2 12-23 18-22s-4 22 2 22 8-21 14-21-2 20 5 18 8-10 16-11" fill="none" stroke="#123c5c" strokeWidth="4" strokeLinecap="round" />
        </Squircle>
      </DockItem>
      <DockItem>
        <Squircle bg="bg-linear-to-b from-[#fb5c74] to-[#fa233b]">
          <path d="M29 22l28-7v37M29 22v35M29 30l28-7" fill="none" stroke="#fff" strokeWidth="5" /><ellipse cx="23" cy="58" rx="8" ry="7" fill="#fff" /><ellipse cx="51" cy="53" rx="8" ry="7" fill="#fff" />
        </Squircle>
      </DockItem>
      <DockItem>
        <Squircle bg="bg-linear-to-b from-[#1bb3f8] to-[#1259db]">
          <path d="M43 17L25 50M35 17l24 44M15 50h28M54 50h10M21 58l-2 4" fill="none" stroke="#fff" strokeWidth="6" strokeLinecap="round" />
        </Squircle>
      </DockItem>
      <DockItem badge="1">
        <Squircle bg="bg-linear-to-b from-[#d5dde2] to-[#8f8f8f]">
          <circle cx="39.500" cy="39.500" r="33" fill="#303234" /><circle cx="39.500" cy="39.500" r="31" fill="none" stroke="#8d9092" strokeWidth="4" strokeDasharray="2 2" /><circle cx="39.500" cy="39.500" r="25" fill="none" stroke="#9a9da0" strokeWidth="4" /><circle cx="39.500" cy="39.500" r="9" fill="none" stroke="#a6a9ac" strokeWidth="3.500" /><path d="M48 39.500h17M35 32L26 18M35 47l-9 14" stroke="#a6a9ac" strokeWidth="4" />
        </Squircle>
      </DockItem>
      <div className="flex w-[47px] shrink-0 items-center justify-center"><div className="h-[96px] w-[2px] bg-[#34372e]" /></div>
      <DockItem dot>
        <Squircle bg="bg-linear-to-b from-[#cfe4ee] to-[#83868a]">
          <rect x="3" y="3" width="73" height="73" rx="15" fill="#050505" /><rect x="8" y="8" width="63" height="63" rx="10" fill="#262628" /><path d="M14 15l8 5-8 5" fill="none" stroke="#fff" strokeWidth="2.500" /><path d="M27 30h11" stroke="#fff" strokeWidth="2.500" />
        </Squircle>
      </DockItem>
      <DockItem dot>
        <div className="flex h-[79px] w-[79px] items-center justify-center rounded-[18px] bg-white"><SiBrave className="h-[70px] w-[70px] text-[#f0502a]" /></div>
      </DockItem>
      <DockItem dot>
        <Squircle bg="bg-linear-to-b from-[#cfe4ee] to-[#83868a]">
          <rect x="3" y="3" width="73" height="73" rx="15" fill="#050505" /><rect x="8" y="8" width="63" height="63" rx="7" fill="#10231f" /><path d="M8 24h63M8 41h63M8 58h63M24 8v63M56 8v63" stroke="#285048" strokeWidth="1" />
          <path d="M8 42h10l3-30 5 43 4-13h5l5-6 5 10 5-4h21" fill="none" stroke="#77d6bb" strokeWidth="1.600" />
        </Squircle>
      </DockItem>
      <DockItem dot>
        <Squircle bg="bg-[#f4f4f6]">
          <circle cx="39.500" cy="39.500" r="34" fill="#2da3e0" /><path d="M17 40L56 24q4-1 3 3l-7 31q-1 4-5 1L37 51l-5 6q-2 1-2-2l-1-10 22-15-26 13-7-2q-3-1-1-1z" fill="#fff" />
        </Squircle>
      </DockItem>
      <DockItem dot>
        <svg className="-mt-[4px] overflow-visible" width="82" height="92" viewBox="0 0 82 94">
          <path d="M13 57h56l13 34H0z" fill="#f98a07" /><path d="M37 2q4-3 8 0l21 63q-25 16-50 0z" fill="#e9e9ea" /><path d="M37 2q4-3 8 0l4 12H33zM28 30h26l6 18q-19 7-38 0z" fill="#f58a0d" /><path d="M16 62q25 16 50 0l2 6q-27 25-54 0z" fill="#e0680a" />
        </svg>
      </DockItem>
      <DockItem dot>
        <Squircle bg="bg-linear-to-b from-[#fbd9da] to-[#c9aaab]">
          <path d="M42 13L11 56l8 3 27-30 14 11 8-1z" fill="#4c4043" /><path d="M46 29L68 40 23 61z" fill="#fb4d7c" />
        </Squircle>
      </DockItem>
      <DockItem dot>
        <Squircle bg="bg-white">
          {excelRows.map((c, i) => <rect key={c} x="21" y={14 + i * 17} width="43" height="17" fill={c} />)}<rect x="43" y="14" width="21" height="17" fill="#33c481" /><rect x="43" y="31" width="21" height="17" fill="#21a366" />
          <rect x="6" y="24" width="31" height="30" rx="3" fill="#107c41" /><path d="M16 31l11 16M27 31L16 47" stroke="#fff" strokeWidth="3.500" />
        </Squircle>
      </DockItem>
      <DockItem dot>
        <svg className="-mt-[9px] overflow-visible" width="87" height="98" viewBox="0 0 87 98">
          <path d="M43.500 0L87 25v48L43.500 98 0 73V25z" fill="#e9b072" /><path d="M0 40q8 3 10 12t9 5q3-7 9-6 5 0 6 7 1 8 5 3 2-6 9-6 6 0 6 8 0 9 5 10 3-2 3-12 0-8 6-8t8 10 5 8q2-4 3-15t3-12v29L43.500 98 0 73z" fill="#73575f" /><path d="M5 28l38 20 38-20" fill="none" stroke="#fff" strokeWidth="1.500" />
        </svg>
      </DockItem>
      <DockItem dot>
        <Squircle bg="bg-[#fbfbfb]">
          <path d="M11 28l5-4 37 30V67L10 33z" fill="#0065a9" /><path d="M11 51l5 4 37-30V12L10 46z" fill="#007acc" /><path d="M51 12l15 6v43l-15 6z" fill="#1f9cf0" />
        </Squircle>
      </DockItem>
      <DockItem dot>
        <Squircle bg="bg-[#f3f3f2]">
          <path d="M39.500 39.500L10 22.500a34 34 0 0 1 59 0z" fill="#e33b2e" /><path d="M39.500 39.500v34A34 34 0 0 1 10 22.500z" fill="#229342" /><path d="M39.500 22.500H69a34 34 0 0 1-29.500 51l15-25z" fill="#fcc31e" />
          <circle cx="39.500" cy="39.500" r="17" fill="#fff" /><circle cx="39.500" cy="39.500" r="13.500" fill="#2a74ea" />
        </Squircle>
      </DockItem>
      <div className="flex w-[47px] shrink-0 items-center justify-center"><div className="h-[96px] w-[2px] bg-[#453d2e]" /></div>
      <DockItem>
        <svg width="74" height="86" viewBox="0 0 74 86">
          <rect x="4" y="0" width="24" height="20" rx="5" fill="#3d97d4" /><rect x="0" y="7" width="74" height="56" fill="#e9e9e9" /><rect x="8" y="3" width="58" height="82" fill="#f5f5f5" /><rect x="7" y="3" width="4" height="82" fill="#222" />
          <g stroke="#9d9d9d" strokeWidth="2">{[9, 13, 17, 21, 25, 33, 40, 50, 54, 58, 62, 66, 70, 74].map((y, i) => <path key={y} d={`M16 ${y}h${i % 3 === 0 ? 20 : i > 6 ? 42 : 26}`} />)}</g><path d="M45 4h20l-1 22q-12 0-14-4z" fill="#fff" stroke="#c8c8c8" />
        </svg>
      </DockItem>
      <DockItem>
        <svg className="mt-[17px]" width="92" height="68" viewBox="0 0 92 68">
          <rect y="1" width="92" height="44" fill="#dcdcdb" /><rect x="13" y="7" width="79" height="37" fill="#fff" />
          <rect x="60" y="37" width="30" height="30" rx="7" fill="#e6edf6" /><path d="M67 37h10q-4 9-3 16h4q0 8 2 14H67a7 7 0 0 1-7-7V44a7 7 0 0 1 7-7z" fill="#1c9af9" /><path d="M66 57q9 7 18 0" fill="none" stroke="#14243a" strokeWidth="1.500" />
        </svg>
      </DockItem>
      <DockItem>
        <svg className="mt-[9px]" width="92" height="78" viewBox="0 0 92 78">
          <rect width="92" height="62" fill="#f4f2ef" /><rect width="92" height="3" fill="#cfcfcf" /><rect y="3" width="92" height="8" fill="#2e2c2b" />
          <g stroke="#b9b0a6" strokeWidth="1.500">{[16, 22, 32, 38, 44, 50, 56].map((y) => <path key={y} d={`M2 ${y}h34M42 ${y}h10M60 ${y}h4M76 ${y}h4`} />)}</g><rect x="2" y="25" width="36" height="3" fill="#dd9a5c" />
          <path d="M76 42l16 9v17l-16 9-16-9V51z" fill="#e9b072" /><path d="M60 56l5 6 5-3 6 6 6-4 10-3v10l-16 9-16-9z" fill="#6a4a52" />
        </svg>
      </DockItem>
      <DockItem>
        <svg className="-mt-[6px]" width="70" height="92" viewBox="0 0 70 92">
          <defs><linearGradient id="bin"><stop stopColor="#c9c9c9" /><stop offset="0.400" stopColor="#f4f4f4" /><stop offset="1" stopColor="#b9b9b9" /></linearGradient></defs>
          <path d="M2 14h66l-7 72q-1 5-26 5T9 86z" fill="url(#bin)" /><ellipse cx="35" cy="13" rx="34" ry="9" fill="#8f8f8f" stroke="#d9d9d9" strokeWidth="2" />
          <path d="M8 14L20 3l9 10 10-12 8 12 6-9 8 11q-26 10-53-1z" fill="#e9e9e9" /><path d="M20 12l5-4 3 7zM42 10l5-2 3 7z" fill="#3d5a8e" /><path d="M26 9l3-3 2 8zM48 11l4-4 1 7z" fill="#b2583a" />
        </svg>
      </DockItem>
    </div>
  );
}

/* ------------------------------------- app ----------------------------------- */

export default function App() {
  return (
    <div className="relative flex h-[2240px] w-[3584px] flex-col overflow-hidden bg-[linear-gradient(to_bottom,#e9e6dc_0%,#e9e6dc_4%,#0f0f06_6%)] font-[Inter,sans-serif]">
      <MenuBar />
      <div className="flex h-[2042px] shrink-0 flex-col overflow-hidden rounded-[20px] bg-[#d3e3fd] shadow-[0_0_0_1.500px_#77756e]">
        <TabStrip />
        <Toolbar />
        <BookmarksBar />
        <div className="h-[64px] shrink-0 bg-linear-to-r from-[#0d1420] to-[#161b2f]" />
        <div className="flex h-[1736px] shrink-0 overflow-hidden font-['Liberation_Sans',sans-serif]">
          <Sidebar />
          <Dashboard />
        </div>
      </div>
      <div className="flex h-[148px] shrink-0 justify-center bg-[radial-gradient(ellipse_at_14%_0%,#4a3d14_0%,transparent_14%),radial-gradient(ellipse_at_22%_100%,#3a3413_0%,transparent_10%),radial-gradient(ellipse_at_75%_100%,#4a2d12_0%,transparent_18%),radial-gradient(ellipse_at_100%_30%,#4a3f1c_0%,transparent_8%),linear-gradient(to_right,#0f1408,#0a0c05_30%,#0c0a05_50%,#1d1108_75%,#1d1a0b)] pt-[10px]">
        <Dock />
      </div>
      <div className="absolute right-0 bottom-0 h-[80px] w-[80px] rounded-tl-[24px] bg-white" />
    </div>
  );
}
